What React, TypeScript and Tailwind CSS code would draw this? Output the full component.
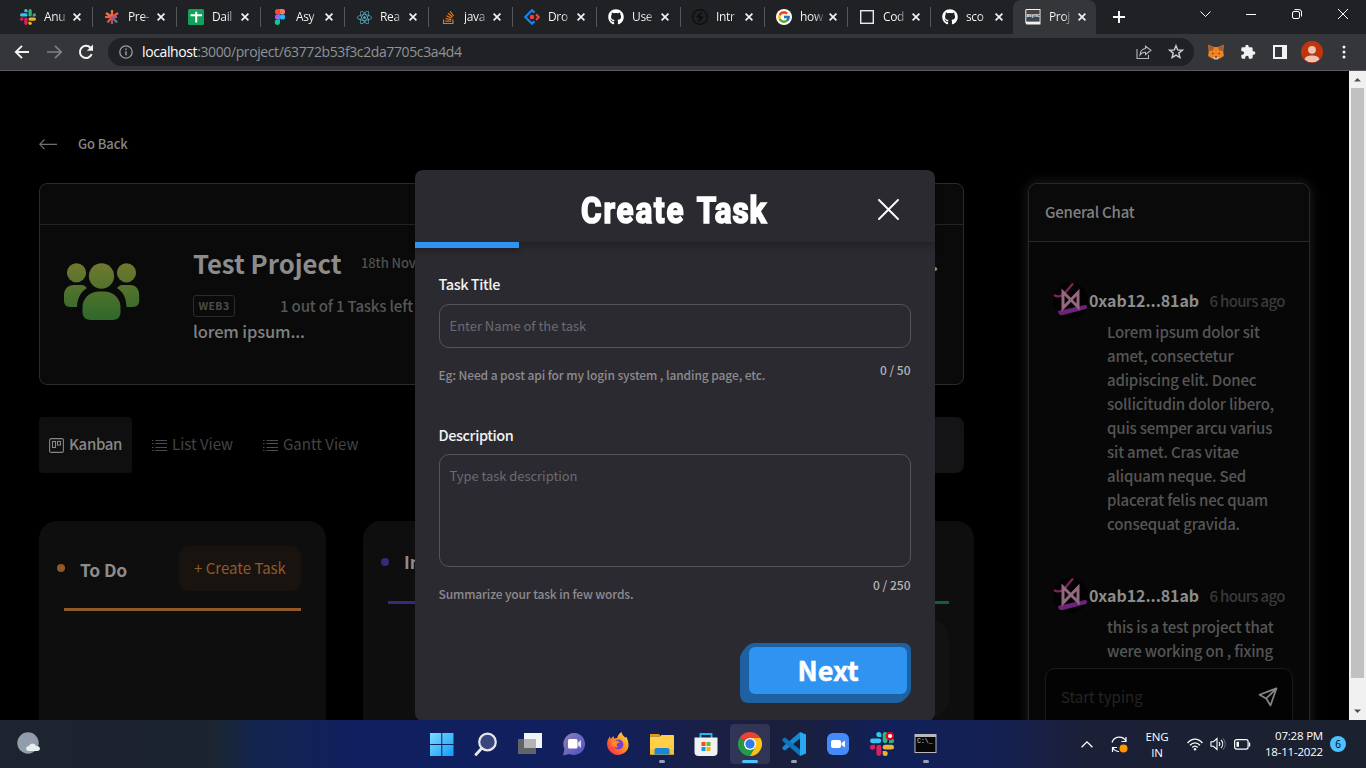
import React from "react";
import { FaGithub, FaStackOverflow, FaReact } from "react-icons/fa";
import { FcGoogle } from "react-icons/fc";

const SlackLogo = ({ size = 16, dot = false }: { size?: number; dot?: boolean }) => (
  <svg width={size} height={size} viewBox="0 0 24 24">
    <g fill="#36c5f0">
      <path d="M8.8 0a2.5 2.5 0 0 0 0 5h2.5V2.5A2.5 2.5 0 0 0 8.8 0Z" />
      <rect x="0" y="6.4" width="11.3" height="4.9" rx="2.45" />
    </g>
    <g fill="#2eb67d">
      <path d="M24 8.8a2.5 2.5 0 0 0-5 0v2.5h2.5A2.5 2.5 0 0 0 24 8.800Z" />
      <rect x="12.700" y="0" width="4.900" height="11.300" rx="2.450" />
    </g>
    <g fill="#ecb22e">
      <path d="M15.200 24a2.500 2.500 0 0 0 0-5h-2.500v2.500a2.500 2.500 0 0 0 2.500 2.500Z" />
      <rect x="12.700" y="12.700" width="11.300" height="4.900" rx="2.450" />
    </g>
    <g fill="#e01e5a">
      <path d="M0 15.200a2.500 2.500 0 0 0 5 0v-2.500H2.500A2.500 2.500 0 0 0 0 15.200Z" />
      <rect x="6.400" y="12.700" width="4.900" height="11.300" rx="2.450" />
    </g>
    {dot && <circle cx="20" cy="4" r="3.200" fill="#fff" stroke="#e3001b" strokeWidth="2.200" />}
  </svg>
);

const Asterisk = () => (
  <svg width="16" height="16" viewBox="0 0 16 16" fill="none" strokeWidth="2.200">
    <path d="M8 8V1" stroke="#f0703c" />
    <path d="M8 8 2 4" stroke="#f2743a" />
    <path d="m8 8 6-4" stroke="#e45a50" />
    <path d="M8 8H1" stroke="#ee5f3f" />
    <path d="M8 8h5" stroke="#c94f6c" />
    <path d="m8 8-4.500 5.500" stroke="#e14f55" />
    <path d="m8 8 5 5.500" stroke="#5a7f9c" />
    <path d="M8 8v7" stroke="#b0506e" />
  </svg>
);

const Sheets = () => (
  <svg width="16" height="16" viewBox="0 0 16 16">
    <rect width="16" height="16" rx="1.500" fill="#12a15b" />
    <path d="M2.500 6.200h11.500M8.200 2.800v10.700" stroke="#fff" strokeWidth="2" />
  </svg>
);

const Figma = () => (
  <svg width="16" height="16" viewBox="0 0 16 16">
    <path d="M8 0H5.600a2.650 2.650 0 0 0 0 5.300H8Z" fill="#f24e1e" />
    <path d="M8 0h2.400a2.650 2.650 0 0 1 0 5.300H8Z" fill="#ff7262" />
    <path d="M8 5.300H5.600a2.650 2.650 0 0 0 0 5.300H8Z" fill="#a259ff" />
    <circle cx="10.500" cy="7.950" r="2.650" fill="#1abcfe" />
    <path d="M8 10.600H5.600A2.650 2.650 0 1 0 8 13.300Z" fill="#0acf83" />
  </svg>
);

const Diamond = () => (
  <svg width="16" height="16" viewBox="0 0 16 16" fill="none" strokeWidth="2.200">
    <path d="M10.500 3.600 8 1.200 1.300 8 8 14.700l2.500-2.400" stroke="#1683f7" />
    <path d="m12 5.200 2.700 2.800-2.700 2.900" stroke="#f0413f" />
    <circle cx="8" cy="8" r="2.300" fill="#f0413f" />
  </svg>
);

const Bolt = () => (
  <svg width="16" height="16" viewBox="0 0 16 16" fill="none" stroke="#0b0b0c">
    <circle cx="8" cy="8" r="7.400" strokeWidth="1.100" />
    <path d="M9.600 3.500 5.600 7.700l4.600.6-4 4.400" strokeWidth="1.400" />
  </svg>
);

const Square = () => (
  <svg width="16" height="16" viewBox="0 0 16 16" fill="none">
    <rect x="1.700" y="1.700" width="12.600" height="12.600" stroke="#e8eaed" strokeWidth="1.400" />
  </svg>
);

const AsyncIcon = () => (
  <svg width="16" height="16" viewBox="0 0 16 16">
    <path d="M1 0h14.500v15.500H1.500L.3 13.500V1Z" fill="#f1f1f1" />
    <rect x="1.300" y="1" width="13.300" height="11.600" fill="#434448" />
    <text x="8" y="8.400" textAnchor="middle" fill="#fff" fontSize="4.600" fontWeight="bold" fontFamily="Liberation Sans, sans-serif">async</text>
  </svg>
);

const CloseX = () => (
  <svg width="8" height="8" viewBox="0 0 8 8">
    <path d="m.6.6 6.800 6.800M7.400.6.600 7.400" stroke="#f1f3f4" strokeWidth="1.700" />
  </svg>
);

const tabs: { label: string; icon: React.ReactNode; active?: boolean }[] = [
  { label: "Anu", icon: <SlackLogo /> },
  { label: "Pre-", icon: <Asterisk /> },
  { label: "Dail", icon: <Sheets /> },
  { label: "Asy", icon: <Figma /> },
  { label: "Rea", icon: <FaReact size={15} color="#58b5cb" /> },
  { label: "java", icon: <FaStackOverflow size={15} color="#e8761d" /> },
  { label: "Dro", icon: <Diamond /> },
  { label: "Use", icon: <FaGithub size={16} color="#fff" /> },
  { label: "Intr", icon: <Bolt /> },
  { label: "how", icon: <span className="flex size-4 items-center justify-center rounded-full bg-white"><FcGoogle size={14} /></span> },
  { label: "Cod", icon: <Square /> },
  { label: "sco", icon: <FaGithub size={16} color="#fff" /> },
  { label: "Proj", icon: <AsyncIcon />, active: true },
];

function TabStrip() {
  return (
    <div className="flex h-[34px] bg-[#202124] pl-[8px]">
      {tabs.map((t, i) => (
        <div
          key={i}
          className={
            "flex h-[34px] shrink-0 items-center pl-[12px] " +
            (i < 9 ? "w-[84px] " : "w-[83px] ") +
            (t.active ? "rounded-t-lg bg-[#35363a]" : "")
          }
        >
          <span className="flex size-4 shrink-0 items-center justify-center">{t.icon}</span>
          <span className="ml-[8px] block w-[24px] shrink-0 bg-linear-to-r from-[#ffffff] from-60% to-[#404144] bg-clip-text text-[12px] leading-[20px] tracking-[-0.35px] whitespace-nowrap text-transparent">
            {t.label}
          </span>
          <span className="ml-[5px] flex w-[8px] shrink-0 justify-center"><CloseX /></span>
          {!t.active && i < 11 && <span className="-mr-px ml-auto h-5 w-px bg-[#55575c]" />}
        </div>
      ))}
      <div className="flex flex-1 items-center justify-between pr-[18px] pl-[17px]">
        <svg width="12" height="12" viewBox="0 0 12 12"><path d="M6 0v12M0 6h12" stroke="#fff" strokeWidth="1.900" /></svg>
        <div className="mb-[6px] flex items-center text-white">
          <svg width="11" height="6" viewBox="0 0 11 6"><path d="m.5.5 5 5 5-5" fill="none" stroke="currentColor" /></svg>
          <svg width="10" height="10" viewBox="0 0 10 10" className="ml-[35px]"><path d="M0 5.500h10" stroke="currentColor" /></svg>
          <svg width="10" height="10" viewBox="0 0 10 10" className="ml-[36px]" fill="none" stroke="currentColor"><rect x=".5" y="2.500" width="7" height="7" rx="1.500" /><path d="M2.500.6h4.500A2.500 2.500 0 0 1 9.500 3v4.500" /></svg>
          <svg width="10" height="10" viewBox="0 0 10 10" className="ml-[36px]"><path d="m0 0 10 10M10 0 0 10" stroke="currentColor" /></svg>
        </div>
      </div>
    </div>
  );
}

function Toolbar() {
  return (
    <div className="flex h-[37px] items-center border-b border-[#5a5b5f] bg-[#35363a] pl-[14px]">
      <svg width="16" height="16" viewBox="0 0 16 16" fill="none" stroke="#f1f3f4" strokeWidth="1.900"><path d="M15 8H2.500M8 1.800 1.800 8 8 14.200" /></svg>
      <svg width="16" height="16" viewBox="0 0 16 16" fill="none" stroke="#808185" strokeWidth="1.700" className="ml-[17px]"><path d="M0 8h13.500M8 1.800 14.200 8 8 14.200" /></svg>
      <svg width="16" height="16" viewBox="0 0 16 16" fill="none" className="ml-[15px]"><path d="M13.700 10.200A6.100 6.100 0 1 1 12.500 3.800" stroke="#f1f3f4" strokeWidth="2" /><path d="M15 .6v6.200H8.800Z" fill="#f1f3f4" /></svg>
      <div className="ml-[14px] flex h-7 w-[1086px] items-center rounded-full bg-[#202124] pr-[10px] pl-[11px]">
        <svg width="14" height="14" viewBox="0 0 14 14" fill="none" stroke="#9aa0a6" strokeWidth="1.300"><circle cx="7" cy="7" r="6.200" /><path d="M7 6.200v4M7 3.500v1.400" strokeWidth="1.500" /></svg>
        <span className="ml-[9px] text-[14px] leading-[20px] tracking-[-0.39px] whitespace-nowrap text-[#8f9398]"><span className="text-white">localhost</span>:3000/project/63772b53f3c2da7705c3a4d4</span>
        <svg width="16" height="16" viewBox="0 0 16 16" fill="none" stroke="#b4b7bb" strokeWidth="1.100" className="ml-auto"><path d="M1 5v9.500h11.500V11" /><path d="M9.500 2.200 15 6.200l-5.500 4.300V8.200C7 8 5.300 9 4 11c.2-3.800 2.300-6 5.500-6.500Z" /></svg>
        <svg width="16" height="16" viewBox="0 0 16 16" fill="none" stroke="#d0d3d6" strokeWidth="1.400" className="ml-[16px]"><path d="m8 1.700 1.700 4.200 4.600.3-3.500 2.900 1.100 4.400L8 11.100l-3.900 2.400 1.100-4.400-3.500-2.900 4.600-.3Z" /></svg>
      </div>
      <svg width="16" height="16" viewBox="0 0 16 16" className="ml-[14px]">
        <path d="M0 .8 6 3h4l6-2.200-.8 5.200.6 6-3.800 2.500-2.500.2H6.500L4 14.500.2 12l.6-6Z" fill="#ee8427" />
        <path d="M0 .8 6 3 5 6.500.8 7ZM16 .8 10 3l1 3.500 4.200.5Z" fill="#a5602f" />
        <path d="M5 13h6l-1 2.500H6Z" fill="#c9beb4" /><path d="m4 9 2 .6-1.800.7ZM12 9l-2 .6 1.800.7ZM7 12.500h2l-.3 1.200H7.300Z" fill="#30241e" />
      </svg>
      <svg width="16" height="16" viewBox="0 0 24 24" fill="#f1f3f4" className="ml-[16px]"><path d="M20.500 11H19V7a2 2 0 0 0-2-2h-4V3.500a2.500 2.500 0 0 0-5 0V5H4a2 2 0 0 0-2 2v3.800h1.500a2.700 2.700 0 0 1 0 5.400H2V20a2 2 0 0 0 2 2h3.800v-1.500a2.700 2.700 0 0 1 5.400 0V22H17a2 2 0 0 0 2-2v-4h1.500a2.500 2.500 0 0 0 0-5Z" /></svg>
      <svg width="14" height="14" viewBox="0 0 14 14" className="ml-[17px]"><rect width="14" height="14" fill="#f1f3f4" /><rect x="2" y="2" width="7" height="10" fill="#35363a" /></svg>
      <svg width="22" height="22" viewBox="0 0 22 22" className="ml-[14px]"><circle cx="11" cy="11" r="11" fill="#bf360c" /><circle cx="11" cy="8.800" r="3.900" fill="#ecc3b6" /><path d="M3.600 18.500c.3-5.500 14.500-5.500 14.800 0a11 11 0 0 1-14.800 0Z" fill="#ecc3b6" /></svg>
      <svg width="4" height="14" viewBox="0 0 4 14" fill="#f1f3f4" className="ml-[19px]"><circle cx="2" cy="2" r="1.500" /><circle cx="2" cy="7" r="1.500" /><circle cx="2" cy="12" r="1.500" /></svg>
    </div>
  );
}

const People = () => (
  <svg width="76" height="58" viewBox="0 0 76 58">
    <defs><linearGradient id="pg" x1="0" y1="0" x2="0" y2="58" gradientUnits="userSpaceOnUse"><stop stopColor="#6f7a2e" /><stop offset="1" stopColor="#2d682b" /></linearGradient></defs>
    <g fill="url(#pg)">
      <circle cx="12.500" cy="9.800" r="9.600" /><circle cx="62.500" cy="9.800" r="9.600" /><ellipse cx="37.500" cy="13" rx="12.600" ry="12.800" />
      <path d="M10 22h8c2 0 3.500 1.500 5 3-7 4.500-9.500 10.500-10 19H6c-4 0-6-3-6-6v-6c0-6 4-10 10-10ZM66 22h-8c-2 0-3.500 1.500-5 3 7 4.500 9 10.500 9.500 19H69c4 0 6.200-3 6.200-6v-6c0-6-3.500-10-9.200-10Z" />
      <path d="M34 28.500h7C50 29 56.500 36 56.500 44v5c0 5-3 8-8 8h-22c-5 0-8-3-8-8v-5c0-8 6.500-15 15.500-15.500Z" />
    </g>
  </svg>
);

const ListIcon = () => (
  <svg width="15" height="13" viewBox="0 0 15 13" stroke="#4c4c4c"><path d="M3.500 1.500H15M3.500 4.500H15M3.500 8.500H15M3.500 11.500H15M0 1.500h1.500M0 4.500h1.500M0 8.500h1.500M0 11.500h1.500" /></svg>
);

const Avatar = () => (
  <svg width="35" height="35" viewBox="0 0 35 35" className="mt-[-1px] shrink-0">
    <circle cx="17.500" cy="17.500" r="17.500" fill="#020202" />
    <path d="M1 12c5 3 8 1 11-2l8-9.500" fill="none" stroke="#7d2559" strokeWidth="2.400" />
    <path d="m5 28 27-6c2 0 3 2 1 4L9 32.300c-2 .5-4-1.800-4-4.300Z" fill="#6d2378" />
    <path d="M10 9v16L25 9.500v14.500L10 9Z" fill="none" stroke="#94697f" strokeWidth="3" />
  </svg>
);

function Message({ lines }: { lines: string[] }) {
  return (
    <div>
      <div className="flex h-[34px] items-center">
        <Avatar />
        <span className="mb-[2px] ml-[1px] w-[120.500px] text-[16px] leading-[24px] font-bold tracking-[-0.08px] whitespace-nowrap text-[#8c8c8c]">0xab12...81ab</span>
        <span className="mb-px text-[15px] leading-[24px] font-medium tracking-[-0.68px] whitespace-nowrap text-[#3a3a3a]">6 hours ago</span>
      </div>
      <div className="mt-[2px] pl-[54px] text-[15px] leading-[24px] font-medium tracking-[-0.18px] whitespace-nowrap text-[#555555]">
        {lines.map((l) => <div key={l}>{l}</div>)}
      </div>
    </div>
  );
}

function Chat() {
  return (
    <aside className="mt-[112px] ml-[54px] flex h-[600px] w-[282px] flex-col rounded-[9px] border border-[#292929] bg-[#070707] shadow-[0_0_12px_1px_#1c1c1c]">
      <div className="flex h-[58px] shrink-0 items-center rounded-t-[9px] border-b border-[#292929] bg-[#0a0a0a] pl-[16px] text-[15px] font-medium tracking-[-0.24px] text-[#808080]">General Chat</div>
      <div className="h-[426px] overflow-hidden pt-[42px] pl-[24px]">
        <Message lines={["Lorem ipsum dolor sit", "amet, consectetur", "adipiscing elit. Donec", "sollicitudin dolor libero,", "quis semper arcu varius", "sit amet. Cras vitae", "aliquam neque. Sed", "placerat felis nec quam", "consequat gravida."]} />
        <div className="mt-[43px]"><Message lines={["this is a test project that", "were working on , fixing"]} /></div>
      </div>
      <div className="mx-[16px] flex h-[60px] shrink-0 items-center justify-between rounded-[10px] border border-[#1b1b1b] bg-[#030303] pr-[14px] pb-[2px] pl-[15px] text-[15px] text-[#242424]">
        Start typing
        <svg width="20" height="20" viewBox="0 0 20 20" fill="none" stroke="#868686" strokeWidth="1.700" strokeLinejoin="round"><path d="M18.500 1.300 1.500 7.700l6.700 3.800 4.300 7ZM18.500 1.300 8.200 11.500" /></svg>
      </div>
    </aside>
  );
}

function Board() {
  return (
    <section className="w-[935px] shrink-0 pt-[61px]">
      <div className="flex h-6 items-center text-[13px] font-medium tracking-[-0.1px] text-[#868686]">
        <svg width="19" height="11" viewBox="0 0 19 11" fill="none" stroke="#707070" strokeWidth="1.200"><path d="M5.500.5.800 5.300l4.700 4.800M.8 5.300H18" /></svg>
        <span className="ml-[20px]">Go Back</span>
      </div>
      <div className="mt-[27px] h-[202px] w-[925px] rounded-[8px] border border-[#2b2b2b] bg-[#0a0a0a]">
        <div className="h-[41px] border-b border-[#252525]" />
        <div className="flex pt-[38px] pl-[24px]">
          <div className="w-[129px]"><People /></div>
          <div className="mt-[-16px] flex-1">
            <div className="flex h-[32px] items-center">
              <span className="w-[168px] text-[25.700px] leading-[32px] font-bold whitespace-nowrap text-[#8c8c8c]">Test Project</span>
              <span className="w-[571px] text-[13px] font-medium tracking-[-0.1px] text-[#505050]">18th Nov 2022</span>
              <span className="text-[20px] font-bold text-[#8c8c8c]">.</span>
            </div>
            <div className="mt-[16px] flex h-[22px] items-center">
              <span className="flex h-[22px] w-[42px] items-center justify-center rounded-[3px] border border-[#2b2b2b] text-[10.500px] font-bold tracking-[0.4px] text-[#4c4c4c]">WEB3</span>
              <span className="ml-[45px] text-[15px] font-medium tracking-[-0.17px] text-[#565656]">1 out of 1 Tasks left</span>
            </div>
            <div className="mt-[1px] text-[16.500px] leading-[26px] font-medium tracking-[-0.15px] text-[#808080]">lorem ipsum...</div>
          </div>
        </div>
      </div>
      <div className="mt-[32px] flex h-14 w-[925px] items-center text-[15px] text-[#444444]">
        <div className="flex h-14 w-[93px] items-center rounded-[4px] bg-[#0f0f0f] pl-[10px] text-[#868686]">
          <svg width="15" height="15" viewBox="0 0 15 15" fill="none" stroke="#868686" strokeWidth="1.100"><rect x=".6" y=".6" width="13.800" height="13.800" rx="1.500" /><rect x="3.500" y="3.500" width="3" height="6" /><rect x="8.500" y="3.500" width="3" height="3.500" /></svg>
          <span className="mb-px ml-[5px] font-medium tracking-[-0.35px]">Kanban</span>
        </div>
        <div className="ml-[20px] flex w-[111px] items-center gap-[5px]"><ListIcon /><span className="mb-px">List View</span></div>
        <div className="flex items-center gap-[5px]"><ListIcon /><span className="mb-px">Gantt View</span></div>
        <div className="ml-auto h-14 w-[180px] rounded-[8px] bg-[#141416]" />
      </div>
      <div className="mt-[48px] flex h-[240px] gap-[37px]">
        <div className="w-[287px] rounded-t-[18px] bg-[#0e0e0e] pt-[25px] pr-[25px] pl-[18px]">
          <div className="flex items-center">
            <span className="mb-px size-2 rounded-full bg-[#91592a]" />
            <span className="mt-[2px] ml-[15px] text-[17.500px] leading-[26px] font-bold tracking-[-0.15px] text-[#8c8c8c]">To Do</span>
            <span className="ml-auto flex h-[45px] w-[122px] items-center justify-center rounded-[10px] bg-[#19130f] text-[15px] whitespace-nowrap text-[#91592a]">+ Create Task</span>
          </div>
          <div className="mt-[17px] ml-[7px] h-[3px] bg-[#91592a]" />
        </div>
        <div className="w-[287px] rounded-t-[18px] bg-[#0e0e0e] pt-[28px] pr-[25px] pl-[18px]">
          <div className="flex items-center text-[17.500px] leading-[26px] font-bold text-[#8c8c8c]">
            <span className="size-2 rounded-full bg-[#38297a]" /><span className="ml-[15px]">In Progress</span>
          </div>
          <div className="mt-[26px] ml-[7px] h-[3px] bg-[#38297a]" />
        </div>
        <div className="w-[287px] rounded-t-[18px] bg-[#0e0e0e] pt-[80px] pr-[25px] pl-[25px]">
          <div className="h-[3px] bg-[#145c3c]" />
          <div className="mt-[16px] h-[97px] rounded-[18px] bg-[#121212]" />
        </div>
      </div>
    </section>
  );
}

function CreateTaskModal() {
  return (
    <div className="absolute top-[99px] left-[415px] h-[551px] w-[520px] rounded-[8px] bg-[#2b2a30]">
      <div className="flex h-[72px] items-center rounded-t-[8px] shadow-[0_3px_6px_rgba(0,0,0,0.25)]">
        <h1 className="mt-[9px] ml-[166px] w-[187px] origin-left scale-x-[0.85] font-[Roboto,sans-serif] text-[37px] leading-[44px] font-bold whitespace-nowrap text-white [-webkit-text-stroke:1.700px_#fff]">
          <span className="tracking-[2.200px]">Create</span> <span className="ml-[4px] tracking-[1px]">Task</span>
        </h1>
        <svg width="21" height="21" viewBox="0 0 21 21" className="mt-[7px] mr-[36px] ml-auto"><path d="m1 1 19 19M20 1 1 20" stroke="#fff" strokeWidth="1.900" strokeLinecap="round" /></svg>
      </div>
      <div className="h-[6px] w-[104px] bg-[#2f93f1] shadow-[0_4px_5px_rgba(0,0,0,0.22)]" />
      <div className="px-[24px] pt-[26px]">
        <div className="-mt-px -ml-[0.5px] h-[22px] text-[14.500px] leading-[22px] font-medium tracking-[-0.45px] text-[#f2f2f2]">Task Title</div>
        <div className="mt-[9px] flex h-[44px] items-center rounded-[10px] border border-[#55545a] pb-px pl-[9.500px] text-[13px] tracking-[-0.03px] text-[#6c6b70]">Enter Name of the task</div>
        <div className="mt-[13px] -ml-[0.5px] flex h-[30px] justify-between text-[12px] leading-[20px] font-medium text-[#8c8b8f]">
          <span className="mt-[4px] tracking-[-0.1px]">Eg: Need a post api for my login system , landing page, etc.</span>
          <span className="-mt-px mr-[0.5px] text-[#b5b5b8]">0 / 50</span>
        </div>
        <div className="mt-[33px] -ml-[0.5px] h-[23px] text-[14.500px] leading-[22px] font-medium tracking-[-0.42px] text-[#f2f2f2]">Description</div>
        <div className="mt-[7px] h-[113px] rounded-[10px] border border-[#55545a] pt-[11px] pl-[9.500px] text-[13px] leading-[20px] tracking-[-0.05px] text-[#6c6b70]">Type task description</div>
        <div className="mt-[9px] -ml-[0.5px] flex h-[30px] justify-between text-[12px] leading-[20px] font-medium text-[#8c8b8f]">
          <span className="mt-[8px] tracking-[-0.14px]">Summarize your task in few words.</span>
          <span className="-mt-px mr-[0.5px] text-[#b5b5b8]">0 / 250</span>
        </div>
        <div className="relative mt-[37px] -mr-px ml-auto h-[60px] w-[172px]">
          <svg width="172" height="60" viewBox="0 0 172 60" className="absolute inset-0"><path d="M15 0h148q8 0 8 8v38q0 5-7 11-3 3-7 3H9q-9 0-9-9V14Q2 8 6 4q4-4 9-4Z" fill="#1d61a3" /></svg>
          <button className="relative mt-[4px] ml-[9px] h-[47px] w-[158px] rounded-[6px] bg-[#2f93f1] pb-[2px] text-[27px] leading-[45px] font-bold text-white [-webkit-text-stroke:0.500px_#fff]">Next</button>
        </div>
      </div>
    </div>
  );
}

function Taskbar() {
  return (
    <footer className="flex h-12 items-center bg-[linear-gradient(90deg,#1e232f_0px,#1b2430_215px,#12254e_255px,#111f60_360px,#10205c_600px,#1a1f45_710px,#1a1f3d_800px,#10205a_890px,#152052_1000px,#1b2038_1080px,#1b212e_1366px)] text-white">
      <svg width="24" height="24" viewBox="0 0 24 24" className="ml-[17px]">
        <circle cx="11" cy="11" r="10.700" fill="#929dab" /><path d="M12 19c-4 0-3.500-5 0-5 1-3.500 6-3.500 7 0 5-.5 5 5 1.500 5Z" fill="#e8edf2" />
      </svg>
      <div className="ml-[379px] flex items-center">
        <Slot><svg width="24" height="24" viewBox="0 0 24 24"><defs><linearGradient id="wg" x2="1" y2="1"><stop stopColor="#7fdcff" /><stop offset="1" stopColor="#0f9cf8" /></linearGradient></defs><path fill="url(#wg)" d="M0 1h11.300v11H0ZM12.300 1H23.500v11H12.300ZM0 13h11.300v11H0ZM12.300 13H23.500v11H12.300Z" /></svg></Slot>
        <Slot><svg width="24" height="24" viewBox="0 0 24 24" fill="none"><circle cx="13.500" cy="10" r="8.300" fill="#39477e" stroke="#e5e7ea" strokeWidth="2.200" /><path d="m7.500 16.500-5.500 6" stroke="#e5e7ea" strokeWidth="2.800" strokeLinecap="round" /></svg></Slot>
        <Slot><svg width="24" height="24" viewBox="0 0 24 24"><path d="M0 7h18v15H0Z" fill="#626366" /><path d="M6 1h18v15H6Z" fill="#f3f4f6" /><path d="M6 7h12v9H6Z" fill="#b2b4b8" /></svg></Slot>
        <Slot><svg width="24" height="24" viewBox="0 0 24 24"><defs><linearGradient id="tg" x1="0" y1="0" x2="1" y2="1"><stop stopColor="#8f7fb6" /><stop offset="1" stopColor="#4e50c4" /></linearGradient></defs><path d="M12.500 1a11 11 0 1 1-5 21L1 23.500 2.500 17A11 11 0 0 1 12.500 1Z" fill="url(#tg)" /><rect x="6" y="7" width="9.500" height="9.500" rx="1.500" fill="#fff" /><path d="m16 10.500 3-2.500v8l-3-2.500Z" fill="#dedef5" /></svg></Slot>
        <Slot><svg width="24" height="24" viewBox="0 0 24 24"><defs><linearGradient id="fg" x1="1" y1="0" x2="0" y2="1"><stop stopColor="#ffe14a" /><stop offset=".4" stopColor="#ff9a1f" /><stop offset=".75" stopColor="#ff4b3a" /><stop offset="1" stopColor="#e5258a" /></linearGradient></defs><path d="M12 23A11 11 0 0 1 1.500 9C2 7 3 5.500 4 4.500L4.500 7l3-3 .5 2.500 3-.5c1-3 2.500-5 4.500-6 .5 3 2 3.500 3.500 5.500l1.500-.5C24.500 13 23 22 12 23Z" fill="url(#fg)" /><circle cx="12.500" cy="12.500" r="4.900" fill="#7542c9" /><path d="M6 10c2-2 5-2 8 1-4-.5-4 2-2 4-5 1-7-2-6-5Z" fill="#ff8a2b" /></svg></Slot>
        <Slot mark="w-[6px] bg-[#9aa0b5]"><svg width="24" height="24" viewBox="0 0 24 24"><path d="M0 2h9l2 2.500H0Z" fill="#e29b12" /><path d="M0 4.500h10L11.500 3H23q1 0 1 1v18.500H0Z" fill="#ffcf48" /><path d="M0 17h24v5.500H0Z" fill="#f8c030" /><path d="M4.500 22.500V18q0-2 2-2h11q2 0 2 2v4.500Z" fill="#1a86d8" /></svg></Slot>
        <Slot><svg width="24" height="24" viewBox="0 0 24 24"><path d="M6.500 7V2h11v5" fill="none" stroke="#27b7ee" strokeWidth="1.900" /><path d="M.5 5.500h23V20q0 4-4 4h-15q-4 0-4-4Z" fill="#f0f1f3" /><path d="M7.500 10h4v4h-4Z" fill="#f04b24" /><path d="M12.500 10h4v4h-4Z" fill="#74b51c" /><path d="M7.500 15h4v4h-4Z" fill="#0e9be8" /><path d="M12.500 15h4v4h-4Z" fill="#fab20b" /></svg></Slot>
        <Slot active mark="w-[16px] bg-[#4cc2ff]"><svg width="24" height="24" viewBox="0 0 24 24"><path d="M12 12 1.600 6A12 12 0 0 1 22.400 6H12Z" fill="#ea4335" /><path d="M12 12 1.600 6A12 12 0 0 0 12 24l5.200-9Z" fill="#249a48" /><path d="M22.400 6H12l5.200 9L12 24A12 12 0 0 0 22.400 6Z" fill="#fbc116" /><circle cx="12" cy="12" r="6" fill="#fff" /><circle cx="12" cy="12" r="4.700" fill="#2e7bea" /></svg></Slot>
        <Slot mark="w-[6px] bg-[#9aa0b5]"><svg width="24" height="24" viewBox="0 0 24 24"><path d="m18 0 6 2.500v19L18 24Z" fill="#29a8f2" /><path d="M18 0v6.500L3 18.500.5 17v-2Z" fill="#1688cf" /><path d="M18 24v-6.500L3 5.500.5 7v2Z" fill="#0f74b9" /></svg></Slot>
        <Slot><svg width="24" height="24" viewBox="0 0 24 24"><rect x="1" y="1" width="22" height="22" rx="6" fill="#448af8" /><rect x="5" y="8" width="10" height="8" rx="2" fill="#fff" /><path d="m15.500 11 3.500-2.500v7L15.500 13Z" fill="#fff" /></svg></Slot>
        <Slot><SlackLogo size={24} dot /></Slot>
        <Slot mark="w-[6px] bg-[#9aa0b5]"><svg width="24" height="24" viewBox="0 0 24 24"><rect x=".5" y="2" width="22" height="19" fill="#b9b9bb" /><rect x="1.500" y="5" width="20" height="15" fill="#070707" /><text x="3" y="11" fill="#ddd" fontSize="6.500" fontFamily="Liberation Mono, monospace">C:\_</text></svg></Slot>
      </div>
      <div className="ml-auto flex items-center pr-[20px] text-[12px] leading-[16px]">
        <svg width="12" height="7" viewBox="0 0 12 7" fill="none" stroke="#fff" strokeWidth="1.300"><path d="m.6 6.300 5.400-5.400 5.400 5.400" /></svg>
        <svg width="17" height="17" viewBox="0 0 17 17" fill="none" stroke="#fff" strokeWidth="1.200" className="ml-[18px]"><path d="M1 6.500C3-.5 12-.5 15 5M15 1v4.500h-4.500M1.500 16v-4.500H6M2 12c1.500 2.500 4 3.500 6 3.500" /><circle cx="12.500" cy="12.500" r="4" fill="#ff9800" stroke="none" /></svg>
        <div className="ml-[16px] w-[26px] pt-px text-center text-[11.500px] tracking-[-0.1px]">ENG<br />IN</div>
        <svg width="16" height="13" viewBox="0 0 16 13" fill="none" stroke="#fff" strokeWidth="1.300" className="ml-[17px]"><path d="M.6 5C5-.3 11-.3 15.400 5M3 7.300c3-3.300 7-3.300 10 0M5.300 9.500c1.700-1.800 3.700-1.800 5.400 0" /><circle cx="8" cy="11.300" r="1.200" fill="#fff" stroke="none" /></svg>
        <svg width="16" height="14" viewBox="0 0 16 14" fill="none" stroke="#fff" strokeWidth="1.100" className="ml-[7px]"><path d="M1 4.700h2.500L7 1.500v11L3.500 9.300H1ZM9 5c1 1.200 1 2.800 0 4M11 3c2.200 2.300 2.200 5.700 0 8" /><path d="M13 1.500c3 3.300 3 7.700 0 11" stroke="#6b7078" /></svg>
        <svg width="17" height="11" viewBox="0 0 17 11" fill="none" stroke="#fff" strokeWidth="1.200" className="ml-[8px]"><rect x=".6" y=".6" width="13.500" height="9.500" rx="2" /><rect x="2.500" y="2.800" width="2.500" height="5" fill="#fff" stroke="none" /><path d="M15.600 3.500v4" /></svg>
        <div className="ml-[12px] w-[60px] text-right text-[11.500px] tracking-[-0.2px] whitespace-nowrap"><div className="-ml-4">07:28 PM</div><div className="-ml-4">18-11-2022</div></div>
        <span className="ml-[7px] flex size-4 items-center justify-center rounded-full bg-[#4cc2ff] text-[10px] text-black">6</span>
      </div>
    </footer>
  );
}

function Slot({ children, active, mark }: { children: React.ReactNode; active?: boolean; mark?: string }) {
  return (
    <div className="flex w-[44px] justify-center">
      <div className={"flex h-10 w-10 flex-col items-center rounded pt-[8px] " + (active ? "bg-white/10" : "")}>
        {children}
        {mark && <span className={"mt-[4px] h-[3px] rounded-full " + mark} />}
      </div>
    </div>
  );
}

export default function App() {
  return (
    <div className="flex h-[768px] w-[1366px] flex-col overflow-hidden bg-black font-['Open_Sans','Noto_Sans',sans-serif]">
      <TabStrip />
      <Toolbar />
      <div className="flex h-[649px]">
        <main className="relative flex h-full w-[1349px] overflow-hidden bg-black pl-[39px] font-['Noto_Sans_CJK_SC','Noto_Sans',sans-serif]">
          <Board />
          <Chat />
          <CreateTaskModal />
        </main>
        <div className="flex w-[17px] flex-col items-center bg-[#f1f1f1]">
          <svg width="17" height="17" viewBox="0 0 17 17"><path d="M5 10.500 8.500 7l3.500 3.500Z" fill="#505050" /></svg>
          <div className="h-[590px] w-[13px] bg-[#c1c1c1]" />
          <svg width="17" height="17" viewBox="0 0 17 17" className="mt-auto"><path d="M5 6.500 8.500 10 12 6.500Z" fill="#505050" /></svg>
        </div>
      </div>
      <Taskbar />
    </div>
  );
}
